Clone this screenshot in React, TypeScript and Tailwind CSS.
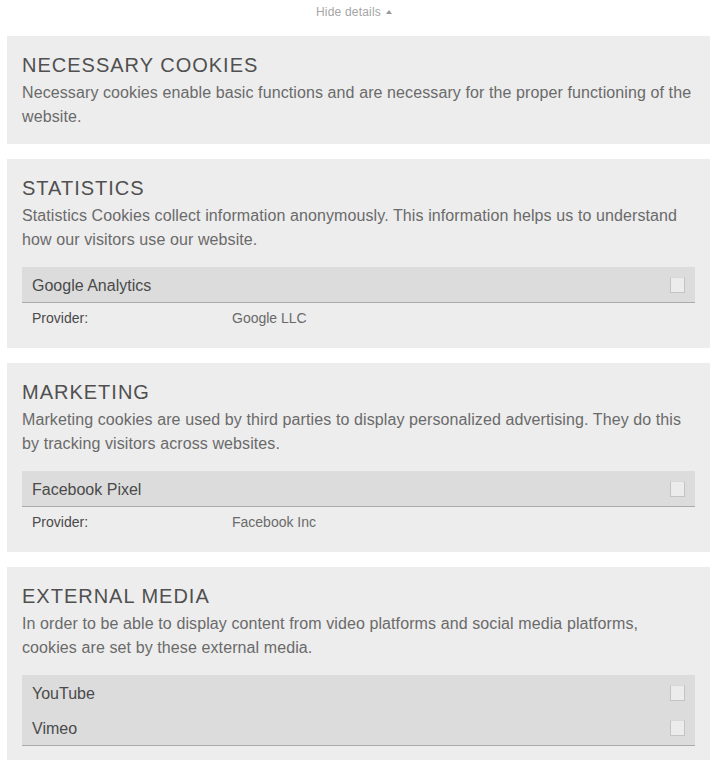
import React from "react";

interface Service {
  name: string;
  provider?: string;
}

interface Category {
  title: string;
  text: string;
  services: Service[];
  showProvider?: boolean;
}

const categories: Category[] = [
  {
    title: "Necessary Cookies",
    text: "Necessary cookies enable basic functions and are necessary for the proper functioning of the website.",
    services: [],
  },
  {
    title: "Statistics",
    text: "Statistics Cookies collect information anonymously. This information helps us to understand how our visitors use our website.",
    services: [{ name: "Google Analytics", provider: "Google LLC" }],
    showProvider: true,
  },
  {
    title: "Marketing",
    text: "Marketing cookies are used by third parties to display personalized advertising. They do this by tracking visitors across websites.",
    services: [{ name: "Facebook Pixel", provider: "Facebook Inc" }],
    showProvider: true,
  },
  {
    title: "External Media",
    text: "In order to be able to display content from video platforms and social media platforms, cookies are set by these external media.",
    services: [{ name: "YouTube" }, { name: "Vimeo" }],
  },
];

function Checkbox() {
  return (
    <span className="block h-[16px] w-[15px] border border-[#c4c4c4] border-t-[#d8d8d8] bg-[#ececec]" />
  );
}

function CategoryBox({ cat }: { cat: Category }) {
  const endsWithBar = cat.services.length > 0 && !cat.showProvider;
  return (
    <div
      className={
        "bg-[#ededed] px-[15px] pt-[16px] " + (endsWithBar ? "pb-[14px]" : "pb-[15px]")
      }
    >
      {/* Titel */}
      <h2 className="mb-[3px] h-[26px] text-[20px] leading-[26px] uppercase tracking-[1px] text-[#505050]">
        {cat.title}
      </h2>
      <p className="text-[16px] leading-[24px] tracking-[0.1px] text-[#6a6a6a]">{cat.text}</p>

      {cat.services.length > 0 && (
        <div className="mt-[15px]">
          <div className="bg-[#dcdcdc] border-b border-[#ababab]">
            {cat.services.map((s) => (
              <div
                key={s.name}
                className="flex h-[35px] items-center justify-between px-[10px]"
              >
                <span className="pt-[2px] text-[16px] text-[#4a4a4a]">{s.name}</span>
                <Checkbox />
              </div>
            ))}
          </div>
          {cat.showProvider &&
            cat.services.map((s) => (
              <div key={s.name} className="flex h-[30px] items-center pl-[10px] text-[14px]">
                <span className="w-[200px] text-[#4a4a4a]">Provider:</span>
                <span className="text-[#6a6a6a]">{s.provider}</span>
              </div>
            ))}
        </div>
      )}
    </div>
  );
}

export default function App() {
  return (
    <div
      className="min-h-screen bg-white pl-[7px] pr-[8px]"
      style={{ fontFamily: '"Liberation Sans", Arial, sans-serif' }}
    >
      {/* Hide details */}
      <div className="flex h-[24px] items-center justify-center gap-[5px] text-[12px] tracking-[0.2px] text-[#a5a5a5]">
        <span className="ml-[-9px]">Hide details</span>
        <span className="mt-[-1px] h-0 w-0 border-x-[3.5px] border-b-[4px] border-x-transparent border-b-[#9a9a9a]" />
      </div>

      <div className="mt-[12px] flex flex-col gap-[15px]">
        {categories.map((c) => (
          <CategoryBox key={c.title} cat={c} />
        ))}
      </div>
    </div>
  );
}
